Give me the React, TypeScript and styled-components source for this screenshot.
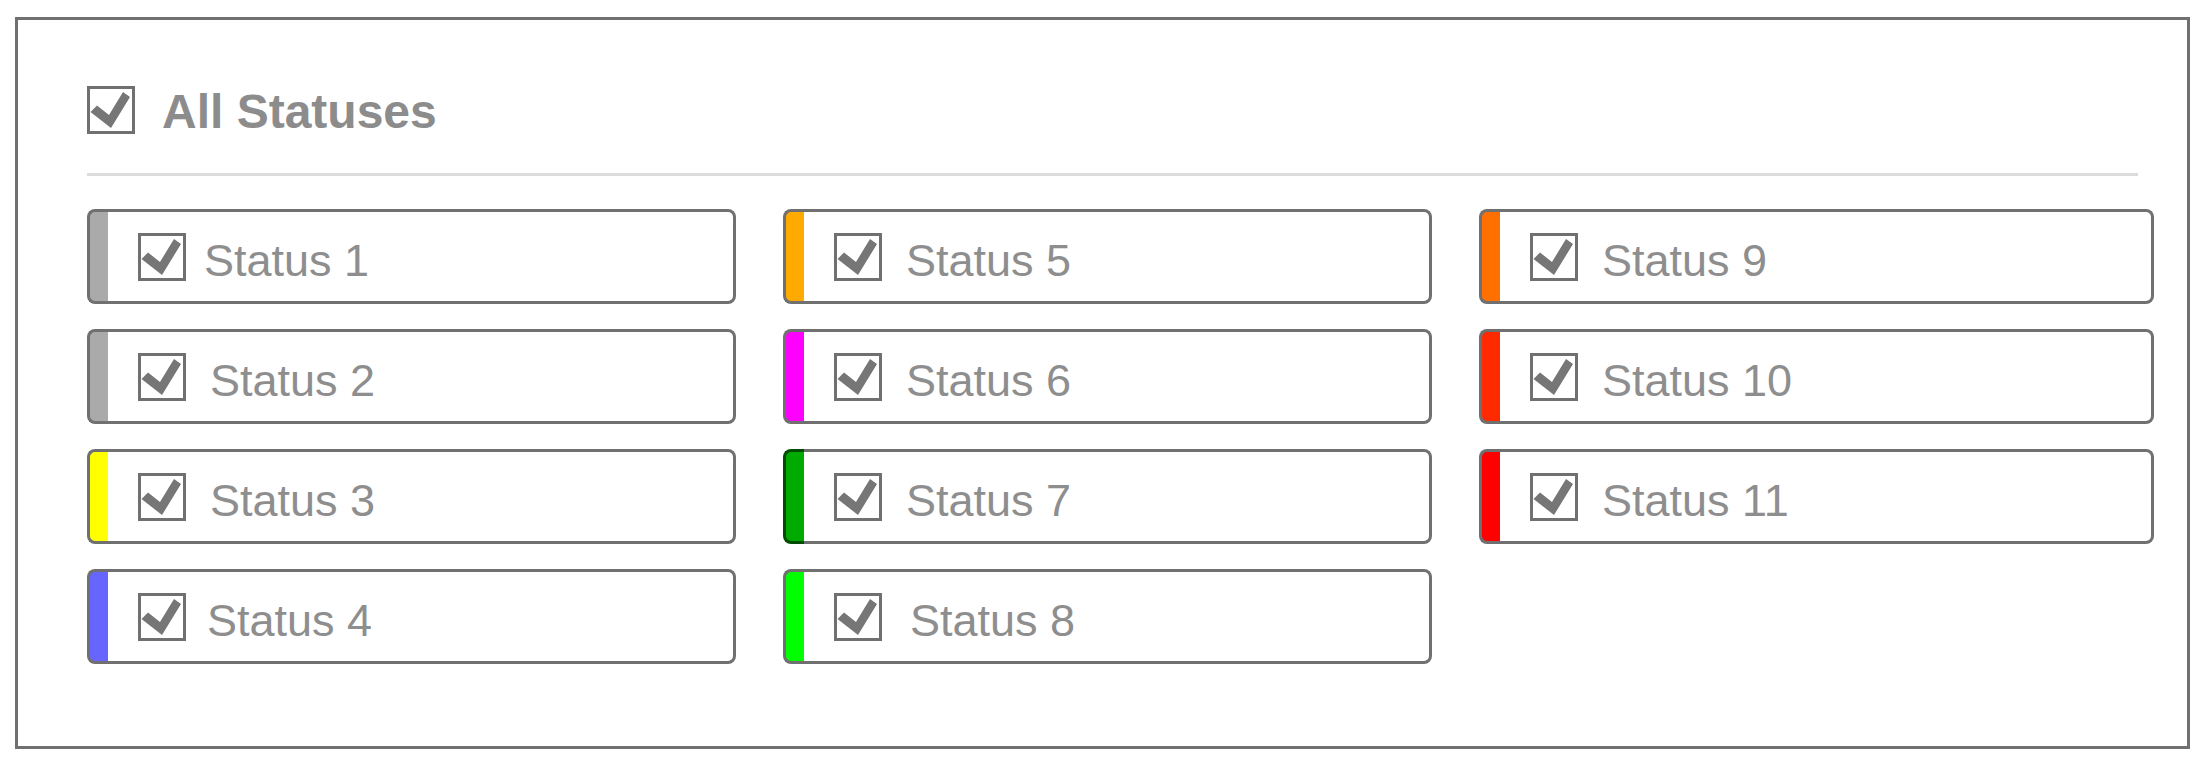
import React from 'react';
import styled, { createGlobalStyle } from 'styled-components';

interface Status {
  label: string;
  color: string;
  edge?: string;
  shift?: number;
}

const statuses: Status[] = [
  { label: 'Status 1', color: '#aaaaaa', shift: -6 },
  { label: 'Status 2', color: '#aaaaaa' },
  { label: 'Status 3', color: '#ffff00' },
  { label: 'Status 4', color: '#6666ff', shift: -3 },
  { label: 'Status 5', color: '#ffaa00' },
  { label: 'Status 6', color: '#ff00ff' },
  { label: 'Status 7', color: '#00aa00', edge: '#004d00' },
  { label: 'Status 8', color: '#00ff00', shift: 4 },
  { label: 'Status 9', color: '#ff7000' },
  { label: 'Status 10', color: '#ff2a00' },
  { label: 'Status 11', color: '#ff0000' },
];

const GlobalStyle = createGlobalStyle`
  html, body {
    margin: 0;
    background: #ffffff;
  }
  body {
    font-family: "Liberation Sans", Arial, sans-serif;
  }
`;

const Page = styled.div`
  padding: 17px 0 0 15px;
`;

const Panel = styled.section`
  box-sizing: border-box;
  width: 2175px;
  height: 732px;
  border: 3px solid #707070;
  padding: 66px 49px 0 69px;
`;

const Header = styled.div`
  display: flex;
  align-items: center;
  height: 48px;
`;

const HeaderLabel = styled.span`
  margin-left: 27px;
  font-size: 48px;
  font-weight: 700;
  color: #8c8c8c;
  line-height: 1;
  padding-top: 3px;
`;

const Divider = styled.hr`
  margin: 39px 0 33px 0;
  border: none;
  height: 3px;
  background: #dcdcdc;
`;

const Grid = styled.div`
  display: grid;
  grid-template-columns: 649px 649px 675px;
  grid-template-rows: repeat(4, 95px);
  grid-auto-flow: column;
  column-gap: 47px;
  row-gap: 25px;
`;

const Row = styled.label`
  display: flex;
  align-items: stretch;
`;

const Strip = styled.div<{ $color: string; $edge: string }>`
  width: 18px;
  flex-shrink: 0;
  background: ${(p) => p.$color};
  border: 3px solid ${(p) => p.$edge};
  border-right: none;
  border-radius: 8px 0 0 8px;
`;

const Body = styled.div`
  flex: 1;
  display: flex;
  align-items: center;
  border: 3px solid #707070;
  border-left: none;
  border-radius: 0 8px 8px 0;
  padding-left: 30px;
`;

const Label = styled.span<{ $shift: number }>`
  margin-left: ${(p) => 24 + p.$shift}px;
  font-size: 45px;
  color: #8e8e8e;
  line-height: 1;
  padding-top: 8px;
`;

const Box = styled.span`
  box-sizing: border-box;
  display: inline-flex;
  flex-shrink: 0;
  width: 48px;
  height: 48px;
  border: 3px solid #707070;
  background: #ffffff;

  svg {
    display: block;
    width: 100%;
    height: 100%;
  }
`;

const CheckBox: React.FC = () => (
  <Box>
    <svg viewBox="0 0 42 42" xmlns="http://www.w3.org/2000/svg">
      <path d="M0.5 23 L7 16.5 L19 26 L33 3 L40 8 L21 39 Z" fill="#767676" />
    </svg>
  </Box>
);

const App: React.FC = () => (
  <>
    <GlobalStyle />
    <Page>
      <Panel>
        <Header>
          <CheckBox />
          <HeaderLabel>All Statuses</HeaderLabel>
        </Header>
        <Divider />
        <Grid>
          {statuses.map((s) => (
            <Row key={s.label}>
              <Strip $color={s.color} $edge={s.edge ?? '#707070'} />
              <Body>
                <CheckBox />
                <Label $shift={s.shift ?? 0}>{s.label}</Label>
              </Body>
            </Row>
          ))}
        </Grid>
      </Panel>
    </Page>
  </>
);

export default App;
